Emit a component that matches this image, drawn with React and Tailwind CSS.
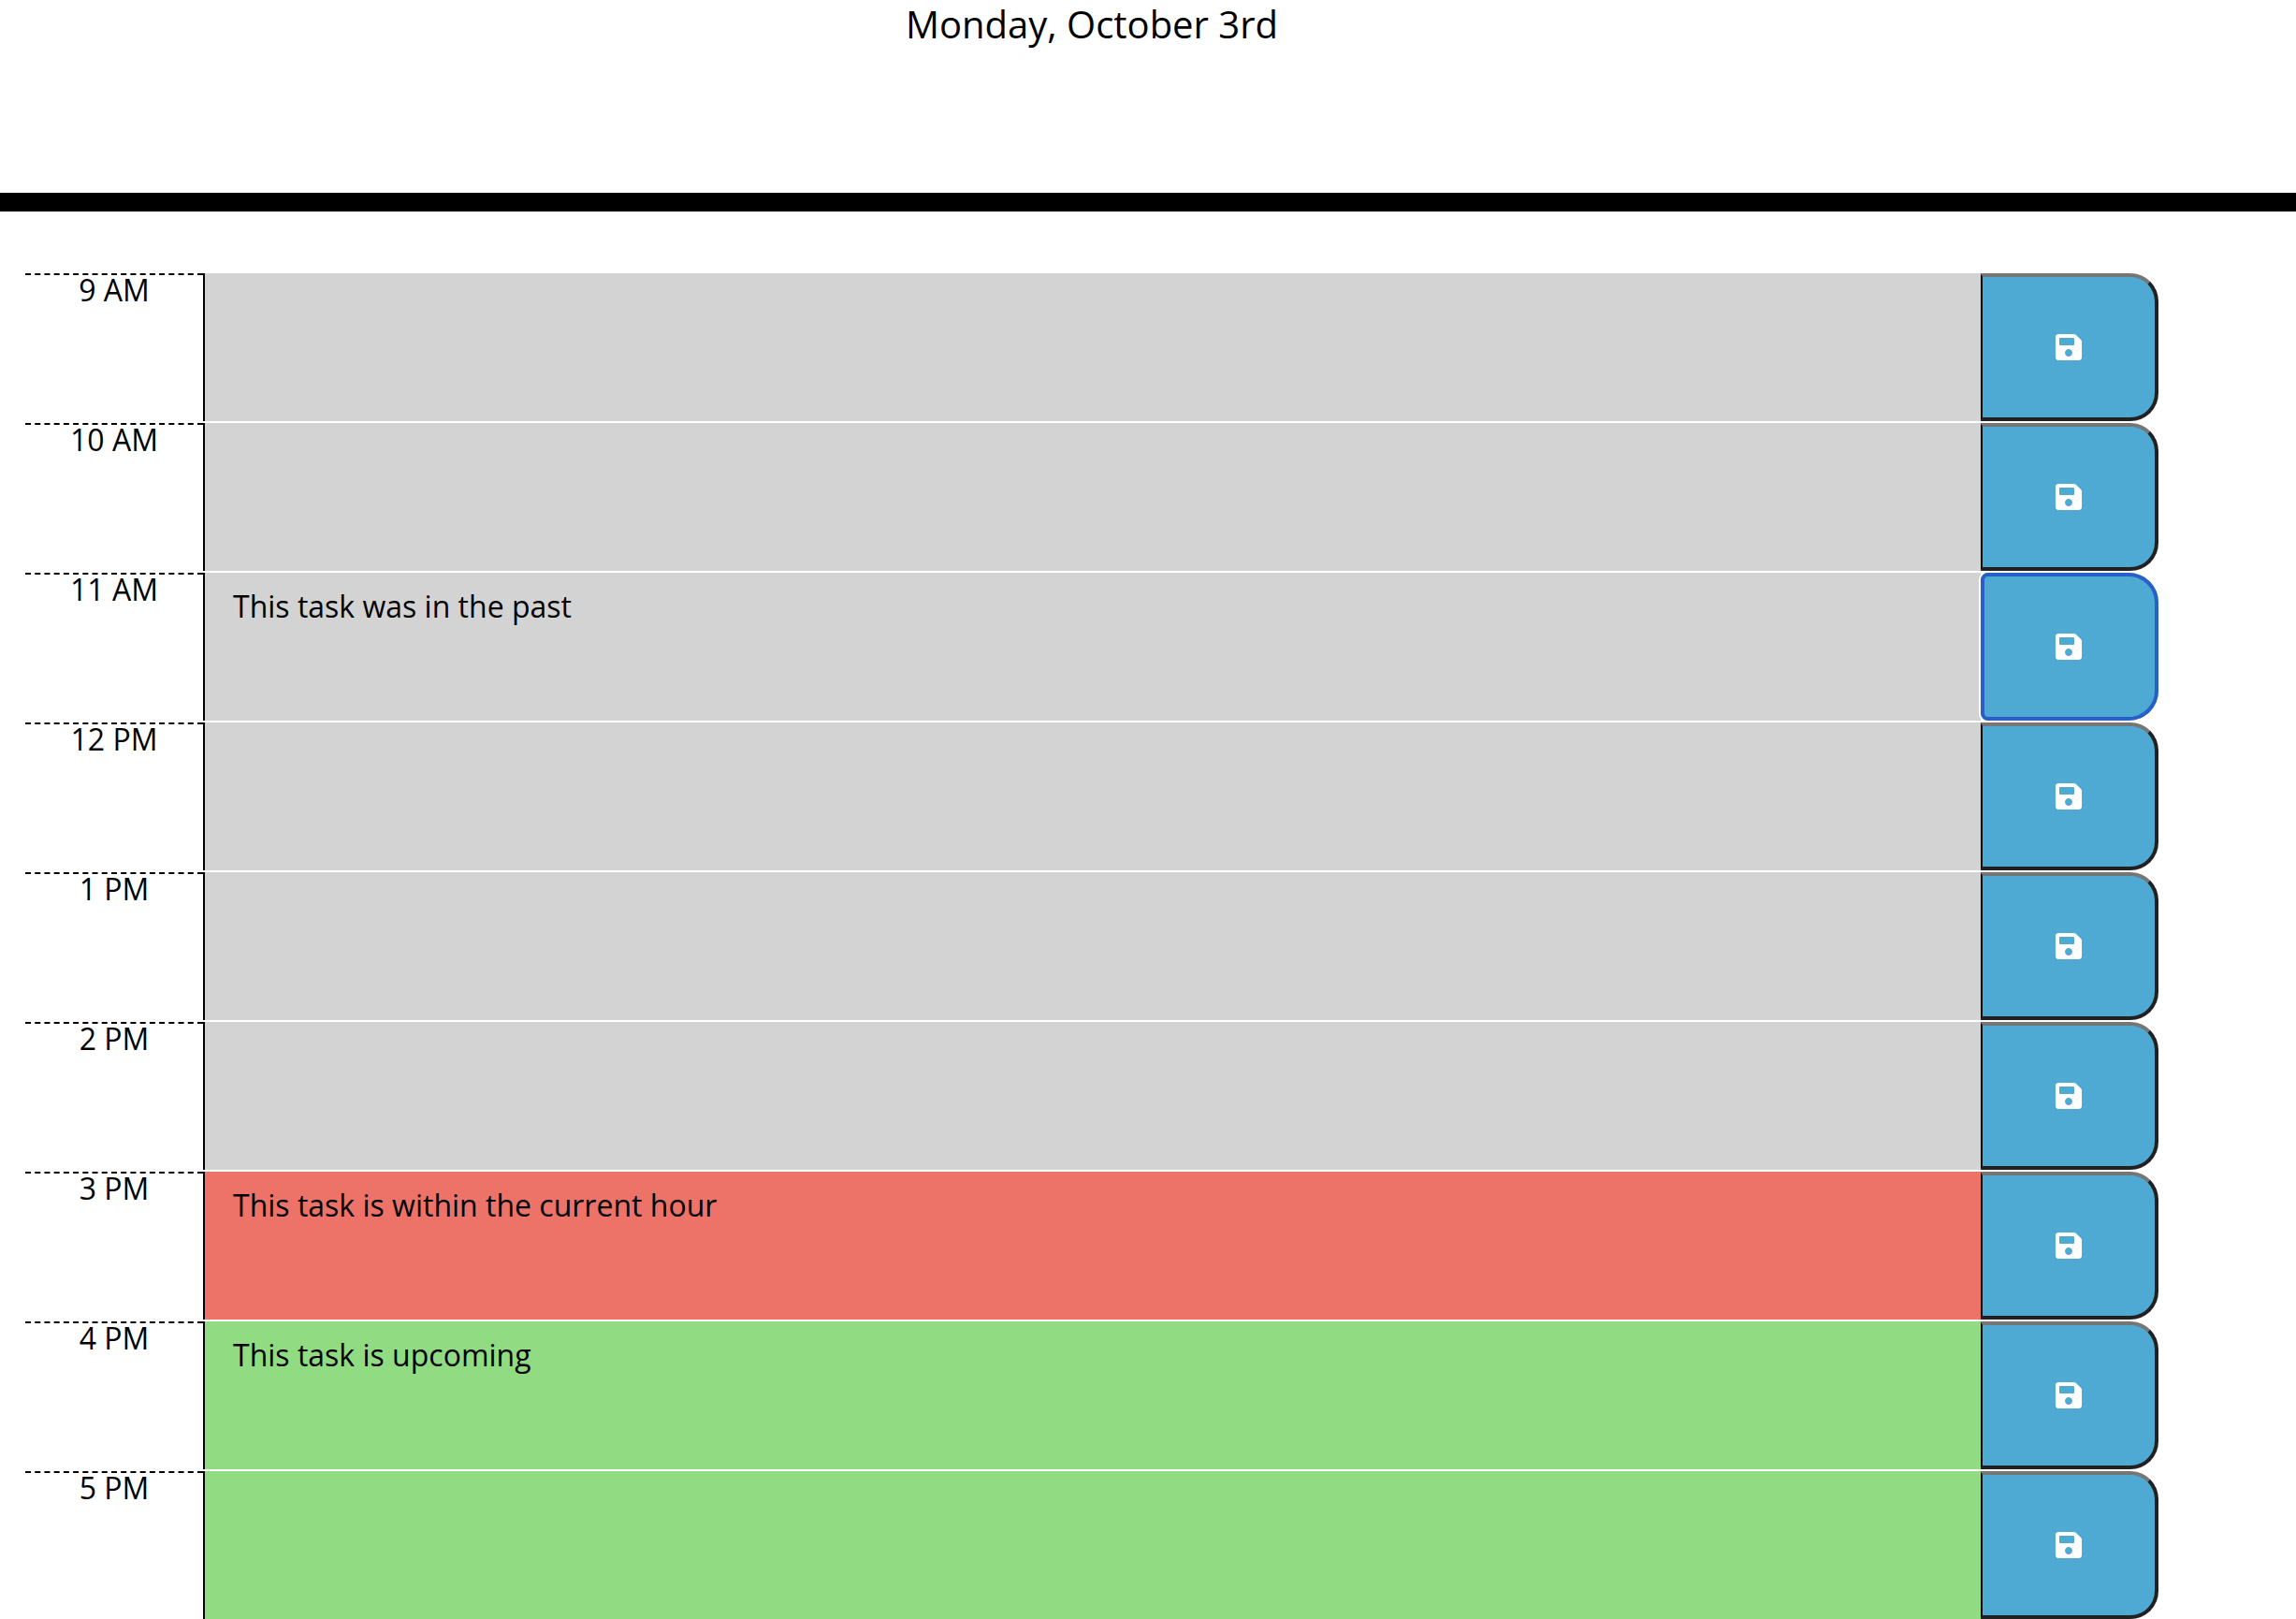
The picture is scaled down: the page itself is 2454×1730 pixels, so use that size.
import { FaSave } from "react-icons/fa";

const TONES = {
  past: "bg-[#d3d3d3]",
  present: "bg-[#ed7368]",
  future: "bg-[#91dc83]",
};

const HOURS = [
  { label: "9 AM", tone: "past", task: "" },
  { label: "10 AM", tone: "past", task: "" },
  { label: "11 AM", tone: "past", task: "This task was in the past", active: true },
  { label: "12 PM", tone: "past", task: "" },
  { label: "1 PM", tone: "past", task: "" },
  { label: "2 PM", tone: "past", task: "" },
  { label: "3 PM", tone: "present", task: "This task is within the current hour" },
  { label: "4 PM", tone: "future", task: "This task is upcoming" },
  { label: "5 PM", tone: "future", task: "" },
];

const SAVE_IDLE =
  "rounded-r-[30px] border-4 border-l-2 border-t-[#767676] border-r-[#212121] border-b-[#212121] border-l-black";
const SAVE_ACTIVE =
  "relative rounded-l-[8px] rounded-r-[32px] border-4 border-l-2 border-transparent outline-4 -outline-offset-4 outline-[#2860c8] shadow-[0_0_0_2px_#fff]";

function TimeBlock({ id, label, tone, task, active }) {
  return (
    <div className="grid h-[158px] grid-cols-12">
      <label htmlFor={id} className="border-t-2 border-dashed border-black text-center text-[32px] leading-8">
        {label}
      </label>
      <textarea
        id={id}
        defaultValue={task}
        className={`col-span-10 block h-full w-full resize-none overflow-auto rounded-none border-l-2 border-black px-[30px] py-3 text-[32px] leading-[48px] outline-none ${TONES[tone]}`}
      />
      <button
        type="button"
        aria-label={`Save ${label}`}
        className={`flex items-center justify-center bg-[#4eaad2] text-white ${active ? SAVE_ACTIVE : SAVE_IDLE}`}
      >
        <FaSave className="size-8" />
      </button>
    </div>
  );
}

export default function App() {
  return (
    <div className="bg-white font-['Open_Sans',sans-serif] text-black">
      <header className="h-[226px] border-b-[20px] border-black pr-[147px] pl-[27px]">
        <p className="text-center text-[40px] leading-[52px]">Monday, October 3rd</p>
      </header>
      <main className="flex flex-col gap-0.5 pt-[66px] pr-[147px] pl-[27px]">
        {HOURS.map((hour, i) => (
          <TimeBlock key={hour.label} id={`hour-${i}`} {...hour} />
        ))}
      </main>
    </div>
  );
}
